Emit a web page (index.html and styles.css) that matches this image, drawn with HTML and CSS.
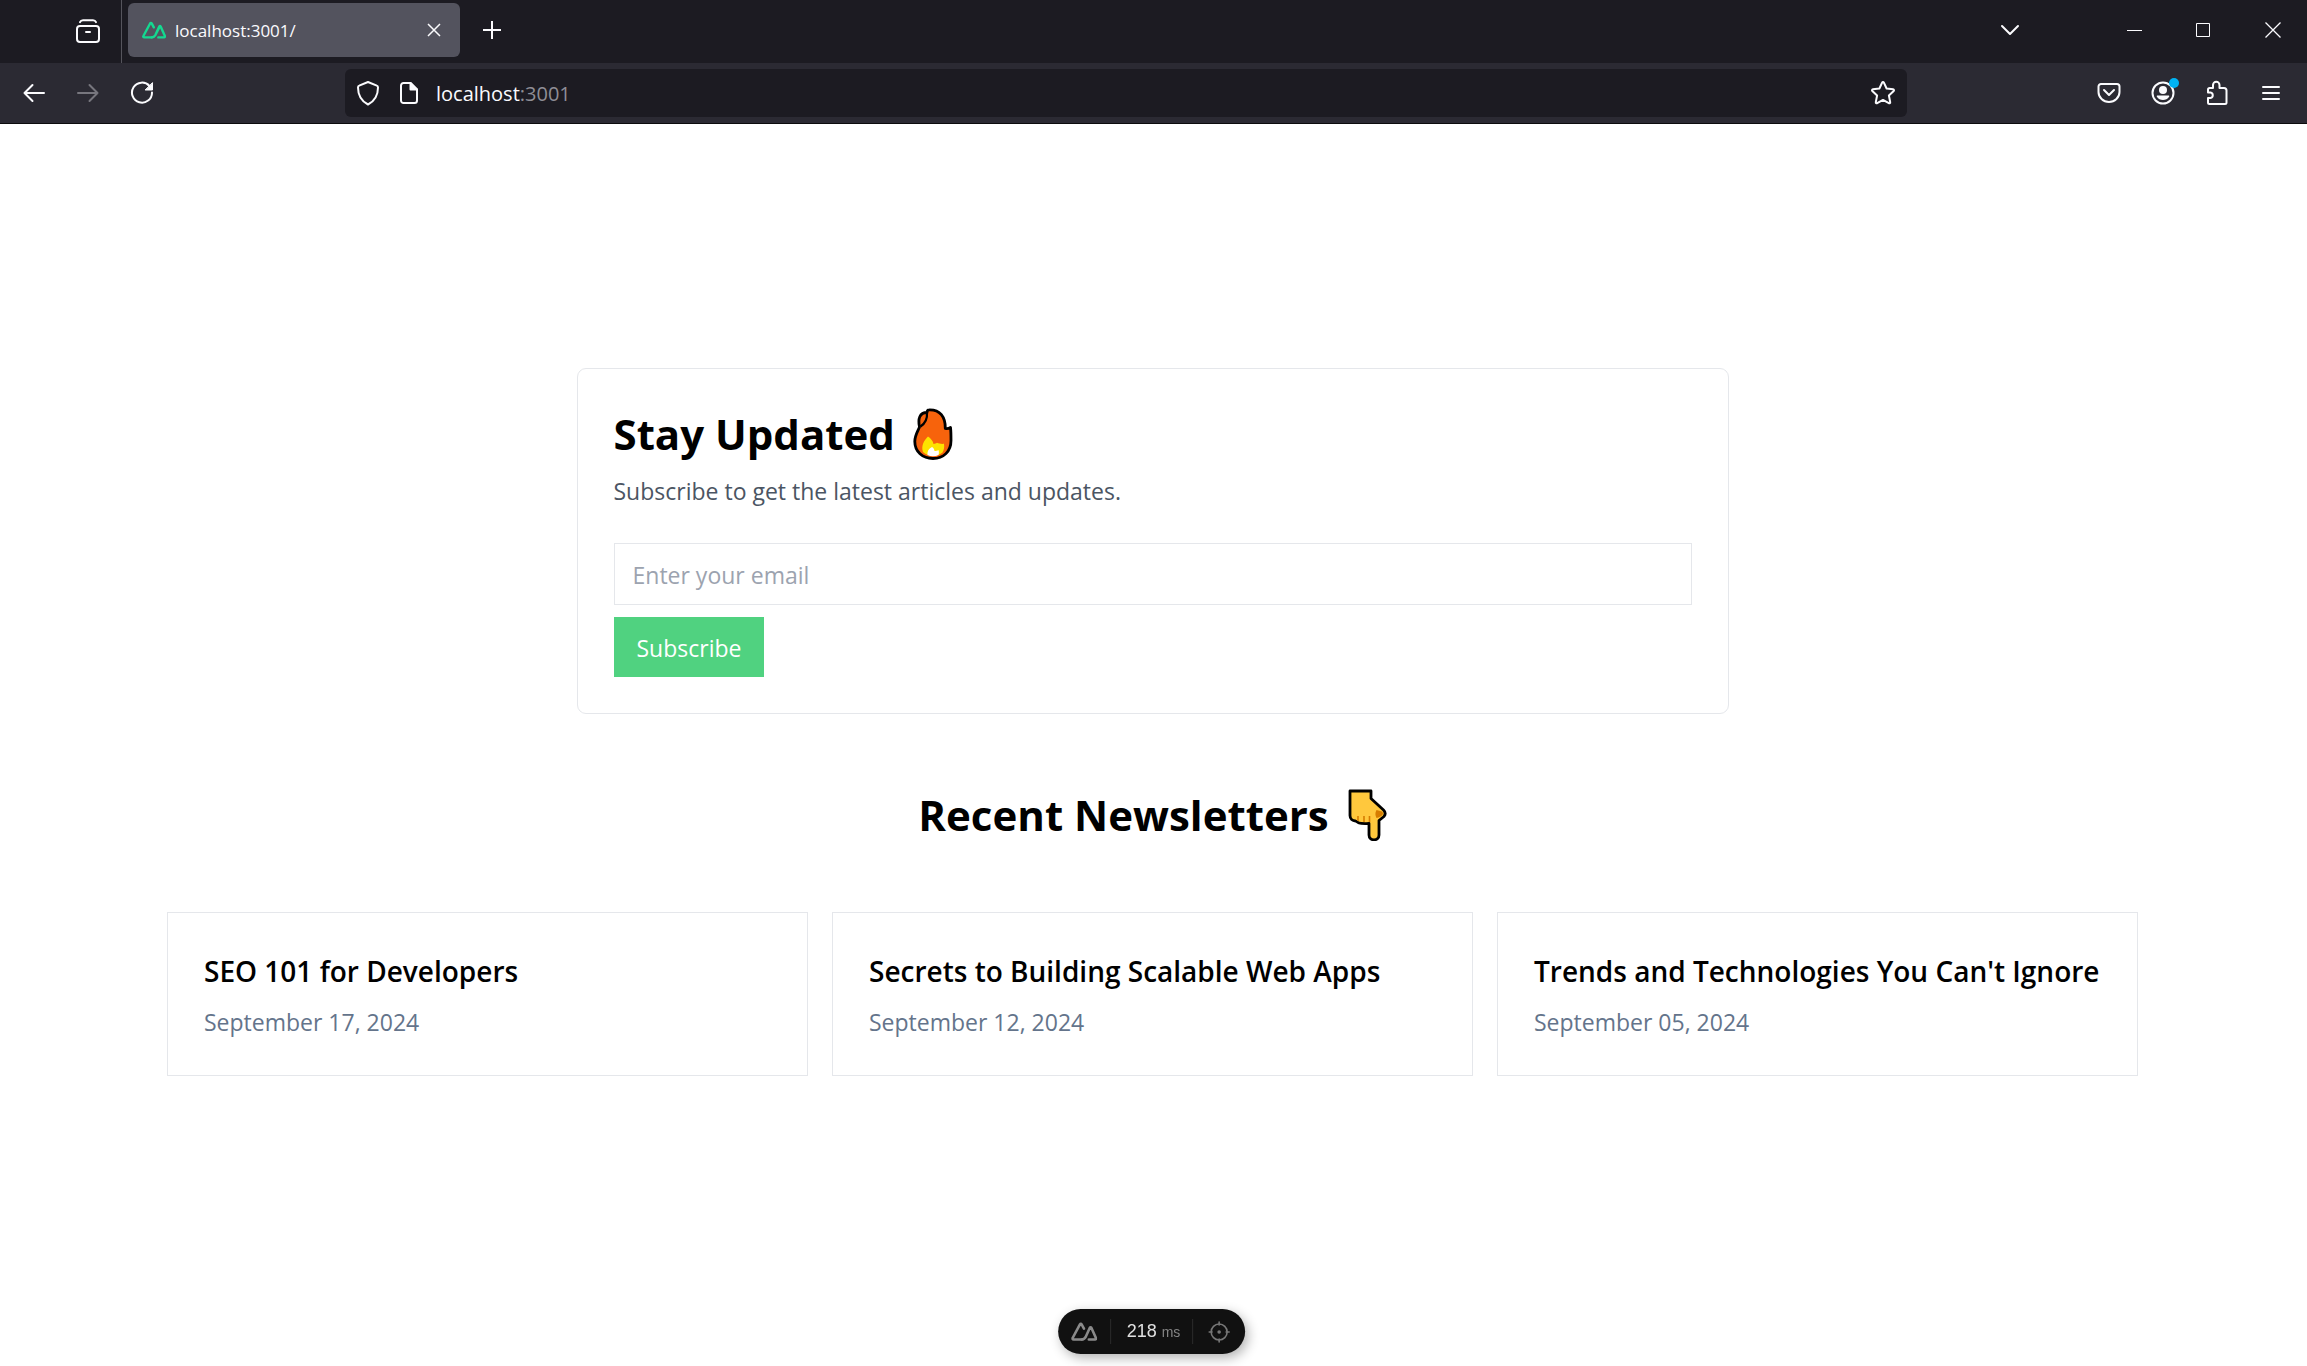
FILE: index.html
```html
<!DOCTYPE html>
<html lang="en">
<head>
  <meta charset="utf-8">
  <meta name="viewport" content="width=device-width, initial-scale=1">
  <title>localhost:3001/</title>
  <link rel="stylesheet" href="styles.css">
</head>
<body>
  <header class="browser">
    <div class="tab-strip">
      <div class="tab-strip-start">
        <button class="tool" type="button" aria-label="Firefox View">
          <svg width="24" height="24" viewBox="0 0 24 24" fill="none" stroke="currentColor" stroke-width="2" stroke-linecap="round"><rect x="1" y="7" width="22" height="16" rx="3"/><path d="M4 3.2C4.6 1.800 5.500 1.200 7 1.200h10c1.500 0 2.400.6 3 2"/><path d="M10 13h4"/></svg>
        </button>
      </div>
      <div class="tab">
        <svg class="tab-icon" width="24" height="18" viewBox="0 0 26 19" fill="none" stroke="#14d990" stroke-width="2.600" stroke-linejoin="round" stroke-linecap="round"><path d="M10.500 17.500H2.400c-.9 0-1.300-.8-.9-1.500L8.800 2.400c.4-.7 1.300-.7 1.700 0l2.300 4.200"/><path d="M10.500 17.500c2.200 0 3-.8 4-2.500l4.200-8.300M10.500 17.500c2.200 0 3-.8 4-2.500l4.200-9.300c.4-.7 1.100-.7 1.500 0l4.600 10.300c.3.800-.1 1.500-.9 1.500h-6.200"/></svg>
        <span class="tab-title">localhost:3001/</span>
        <button class="tab-close" type="button" aria-label="Close tab">
          <svg width="14" height="14" viewBox="0 0 14 14" stroke="currentColor" stroke-width="1.500"><path d="M1 1l12 12M13 1L1 13"/></svg>
        </button>
      </div>
      <button class="tool new-tab" type="button" aria-label="New tab">
        <svg width="18" height="18" viewBox="0 0 18 18" stroke="currentColor" stroke-width="2"><path d="M9 0v18M0 9h18"/></svg>
      </button>
      <button class="tool all-tabs" type="button" aria-label="List all tabs">
        <svg width="20" height="12" viewBox="0 0 20 12" fill="none" stroke="currentColor" stroke-width="2" stroke-linecap="round" stroke-linejoin="round"><path d="M2 2l8 8 8-8"/></svg>
      </button>
      <button class="window-button" type="button" aria-label="Minimize">
        <svg width="15" height="15" viewBox="0 0 15 15" stroke="currentColor"><path d="M0 7.500h15"/></svg>
      </button>
      <button class="window-button" type="button" aria-label="Maximize">
        <svg width="15" height="15" viewBox="0 0 15 15" fill="none" stroke="currentColor"><path d="M.5.5h13v13H.5z"/></svg>
      </button>
      <button class="window-button" type="button" aria-label="Close window">
        <svg width="16" height="16" viewBox="0 0 16 16" stroke="currentColor" stroke-width="1.300"><path d="M.5.5l15 15M15.500.5l-15 15"/></svg>
      </button>
    </div>
    <div class="toolbar">
      <button class="tool" type="button" aria-label="Back">
        <svg width="24" height="24" viewBox="0 0 24 24" fill="none" stroke="currentColor" stroke-width="2" stroke-linecap="round" stroke-linejoin="round"><path d="M22 12H2.500M10.500 4l-8 8 8 8"/></svg>
      </button>
      <button class="tool" type="button" aria-label="Forward" disabled>
        <svg width="24" height="24" viewBox="0 0 24 24" fill="none" stroke="currentColor" stroke-width="2" stroke-linecap="round" stroke-linejoin="round"><path d="M2 12h19.500M13.500 4l8 8-8 8"/></svg>
      </button>
      <button class="tool" type="button" aria-label="Reload">
        <svg width="24" height="24" viewBox="0 0 24 24" fill="none" stroke="currentColor" stroke-width="2" stroke-linecap="round"><path d="M19.500 5A10 10 0 1 0 22 11.500"/><path d="M22.500 2v7h-7z" fill="currentColor" stroke-width="1" stroke-linejoin="round"/></svg>
      </button>
      <div class="url-bar">
        <svg width="24" height="26" viewBox="0 0 24 26" fill="none" stroke="currentColor" stroke-width="2" stroke-linejoin="round"><path d="M12 2l8.800 3.600c.8.300 1.200 1 1.200 1.800C22 14.500 18.500 21 12 24.500 5.500 21 2 14.500 2 7.400c0-.8.4-1.500 1.200-1.800z"/></svg>
        <svg width="18" height="24" viewBox="0 0 18 24" fill="none" stroke="currentColor" stroke-width="2" stroke-linejoin="round"><path d="M10.500 2H3.500A2.500 2.500 0 0 0 1 4.500v15A2.500 2.500 0 0 0 3.500 22h11a2.500 2.500 0 0 0 2.500-2.500V8.500z"/><path d="M10.500 2v6.500H17z" fill="currentColor"/></svg>
        <span class="url">localhost<span class="url-port">:3001</span></span>
        <button class="bookmark" type="button" aria-label="Bookmark this page">
          <svg width="26" height="26" viewBox="0 0 26 26" fill="none" stroke="currentColor" stroke-width="2" stroke-linejoin="round"><path d="M12.100 2.600c.4-.8 1.400-.8 1.800 0l2.700 5.900 6.500.8c.9.100 1.200 1.100.6 1.700l-4.800 4.500 1.300 6.600c.2.900-.7 1.500-1.400 1L13 19.900l-5.800 3.200c-.7.500-1.600-.1-1.400-1l1.300-6.600L2.300 11c-.6-.6-.3-1.600.6-1.700l6.500-.8z"/></svg>
        </button>
      </div>
      <button class="tool" type="button" aria-label="Save to Pocket">
        <svg width="24" height="24" viewBox="0 0 24 24" fill="none" stroke="currentColor" stroke-width="2" stroke-linecap="round" stroke-linejoin="round"><path d="M4 3h16a2.500 2.500 0 0 1 2.500 2.500V11a10.500 10 0 0 1-21 0V5.500A2.500 2.500 0 0 1 4 3z"/><path d="M7 9l5 5 5-5"/></svg>
      </button>
      <button class="tool account" type="button" aria-label="Account">
        <svg width="24" height="24" viewBox="0 0 24 24"><circle cx="12" cy="12" r="10.500" fill="none" stroke="currentColor" stroke-width="2"/><circle cx="12" cy="9" r="4" fill="currentColor"/><path d="M6.500 14.500h11c.8 0 1 .7.6 1.300C16.700 18 14.500 19 12 19s-4.700-1-6.100-3.200c-.4-.6-.2-1.300.6-1.300z" fill="currentColor"/></svg>
      </button>
      <button class="tool" type="button" aria-label="Extensions">
        <svg width="22" height="26" viewBox="0 0 22 26" fill="none" stroke="currentColor" stroke-width="2" stroke-linejoin="round"><path d="M7 8V5a3 3 0 0 1 6.500 0v3H18a2.500 2.500 0 0 1 2.500 2.500v12A1.500 1.500 0 0 1 19 24H3.500A1.500 1.500 0 0 1 2 22.500V18h2.500a2.800 2.800 0 0 0 0-5.500H2v-2.800C2 8.700 2.700 8 3.700 8z"/></svg>
      </button>
      <button class="tool" type="button" aria-label="Open application menu">
        <svg width="18" height="16" viewBox="0 0 18 16" stroke="currentColor" stroke-width="2" stroke-linecap="round"><path d="M1 2h16M1 8h16M1 14h16"/></svg>
      </button>
    </div>
  </header>

  <main class="page">
    <section class="signup">
      <h1 class="heading">Stay Updated
        <svg class="emoji" width="40" height="52" viewBox="0 0 40 52" role="img" aria-label="fire"><path d="M14 4.500c0-1.700.6-2.700 2.200-2.700C27 1.500 32.500 9 32.300 20.500c1.800.4 3.600 0 5.200-1 .5 4 .5 9 .5 13C38 43.500 30.500 50.500 20 50.500S1.800 43.500 1.800 33.500c0-6 3-10 4.700-14.500C4.800 11 6.500 4.500 14 4.500z" fill="#f7630c" stroke="#000" stroke-width="2.800" stroke-linejoin="round"/><path d="M7.500 18.500C12 15.500 14.500 11 14 4.500" fill="none" stroke="#000" stroke-width="2.200"/><path d="M10 44c-2-6 .5-11 5-15.500 2.800 2 5 4.500 5.500 7.500 1.500 0 2.500-.5 3.500-1.200 2 .8 4.500 1.400 7 1 .5 3.500 0 6-1.500 8.700-5.500 4.500-14 4.500-19.500-.5z" fill="#fde300"/><path d="M14.500 47c-.5-3.500 1-6.500 4.500-8 1.500 1 2.500 2.500 2.500 4 1.500 0 3-.4 4-1 .5 1.500.5 3.500 0 5-3.300 1.600-7.700 1.600-11 0z" fill="#fff"/></svg>
      </h1>
      <p class="lead">Subscribe to get the latest articles and updates.</p>
      <form class="signup-form">
        <input class="email" type="email" placeholder="Enter your email" aria-label="Email">
        <button class="subscribe" type="submit">Subscribe</button>
      </form>
    </section>

    <h2 class="heading">Recent Newsletters
      <svg class="emoji" width="40" height="52" viewBox="0 0 40 52" role="img" aria-label="pointing down"><path d="M3 2h21v7.500L36.500 21c2 2 2 4.500.5 6.500l-5 4V46c0 6.500-10 6.500-10 0V34.500c-4 0-7.500.3-10-.5-1.500-.5-2-1.500-3.500-2C5.500 32 3 30 3 26.500z" fill="#ffc83d" stroke="#000" stroke-width="2.800" stroke-linejoin="round"/><path d="M29.500 21l5.500 1.500c2.500 2.500 0 5-5.500 6.500-1.500-2.500-1.500-5.500 0-8z" fill="#d67d00"/><path d="M11 27v5M17 27v6M22.500 27v6" stroke="#d67d00" stroke-width="1.600"/></svg>
    </h2>

    <section class="newsletters">
      <article class="card">
        <h3 class="card-title">SEO 101 for Developers</h3>
        <p class="card-date">September 17, 2024</p>
      </article>
      <article class="card">
        <h3 class="card-title">Secrets to Building Scalable Web Apps</h3>
        <p class="card-date">September 12, 2024</p>
      </article>
      <article class="card">
        <h3 class="card-title">Trends and Technologies You Can't Ignore</h3>
        <p class="card-date">September 05, 2024</p>
      </article>
    </section>
  </main>

  <aside class="devtools">
    <button class="devtools-button" type="button" aria-label="Toggle Nuxt DevTools">
      <svg width="26" height="19" viewBox="0 0 26 19" fill="none" stroke="#8a8a8a" stroke-width="2.600" stroke-linejoin="round" stroke-linecap="round"><path d="M10.500 17.500H2.400c-.9 0-1.300-.8-.9-1.500L8.800 2.400c.4-.7 1.300-.7 1.700 0l2.300 4.200"/><path d="M10.500 17.500c2.200 0 3-.8 4-2.500l4.200-9.300c.4-.7 1.100-.7 1.500 0l4.600 10.300c.3.800-.1 1.500-.9 1.500h-6.200"/></svg>
    </button>
    <div class="devtools-time">218 <small class="devtools-unit">ms</small></div>
    <button class="devtools-button" type="button" aria-label="Inspect component">
      <svg width="22" height="22" viewBox="0 0 22 22" fill="none" stroke="#777" stroke-width="1.600" stroke-linecap="round"><circle cx="11" cy="11" r="8"/><path d="M11 1v3M11 18v3M1 11h3M18 11h3"/><circle cx="11" cy="11" r="1" fill="#777"/></svg>
    </button>
  </aside>
</body>
</html>
```

FILE: styles.css
```css
*,
*::before,
*::after {
  box-sizing: border-box;
}

body {
  margin: 0;
  min-height: 100vh;
  background: #fff;
  color: #000;
  font-family: "Open Sans", "Noto Sans", sans-serif;
  font-size: 23px;
  line-height: 36px;
}

h1,
h2,
h3,
p {
  margin: 0;
}

button,
input {
  padding: 0;
  border: 0;
  background: none;
  color: inherit;
  font: inherit;
}

svg {
  display: block;
  flex: none;
}

/* Browser window */

.browser {
  color: #fbfbfe;
  background: #2b2a33;
  border-bottom: 1px solid #0c0c0d;
}

.tab-strip {
  display: flex;
  align-items: flex-start;
  height: 63px;
  background: #1c1b22;
}

.tool,
.window-button,
.tab-close,
.bookmark {
  display: flex;
  flex: none;
  align-items: center;
  justify-content: center;
}

.tool {
  width: 54px;
}

.tool:disabled {
  color: #77767e;
}

.tab-strip-start {
  display: flex;
  height: 63px;
  padding: 0 6px 2px 61px;
  border-right: 1px solid #55545c;
}

.tab {
  display: flex;
  align-items: center;
  width: 332px;
  height: 54px;
  margin: 3px 5px 0 6px;
  padding: 0 12px 0 14px;
  border-radius: 6px;
  background: #53535e;
}

.tab-title {
  flex: 1;
  margin-left: 9px;
  padding-top: 2px;
  font-size: 17px;
}

.tab-close {
  width: 28px;
  height: 28px;
}

.all-tabs {
  margin: 0 63px 0 auto;
}

.window-button {
  width: 69px;
}

.tab-strip > .tool,
.window-button {
  height: 60px;
}

.toolbar {
  display: flex;
  align-items: center;
  height: 60px;
  padding: 0 9px 0 7px;
}

.url-bar {
  display: flex;
  flex: 1;
  align-items: center;
  height: 48px;
  margin: 0 175px 0 176px;
  padding: 0 11px;
  border-radius: 6px;
  background: #1c1b22;
}

.url {
  flex: 1;
  margin-left: 18px;
  padding-top: 2px;
  font-size: 20px;
}

.url-bar svg + svg {
  margin-left: 20px;
}

.url-port {
  color: #8f8e96;
}

.account {
  position: relative;
}

/* Notification dot on the account button */
.account::after {
  content: "";
  position: absolute;
  top: -3px;
  right: 11px;
  width: 10px;
  height: 10px;
  border-radius: 50%;
  background: #00b3f4;
}

/* Page */

.page {
  display: flex;
  flex-direction: column;
  align-items: center;
  gap: 72px;
  padding: 244px 169px 96px 167px;
}

.signup {
  width: 100%;
  max-width: 1152px;
  padding: 36px;
  border: 1px solid #e5e7eb;
  border-radius: 9px;
}

.heading {
  display: flex;
  align-items: center;
  gap: 18px;
  padding-top: 4px;
  font-size: 42px;
  font-weight: 700;
  line-height: 50px;
}

.heading .emoji {
  margin: -1px 0;
}

.lead {
  margin: 12px 0 34px;
  padding-top: 2px;
  color: #4b5563;
}

.signup-form {
  display: flex;
  flex-direction: column;
  align-items: flex-start;
  gap: 12px;
}

.email {
  width: 100%;
  height: 62px;
  padding: 2px 18px 0;
  border: 1px solid #e5e7eb;
}

.email::placeholder {
  color: #9ca3af;
  opacity: 1;
}

.subscribe {
  height: 60px;
  padding: 2px 23px 0;
  background: #50d280;
  color: #fff;
}

.newsletters {
  display: grid;
  grid-template-columns: repeat(auto-fit, minmax(480px, 1fr));
  gap: 24px;
  width: 100%;
}

.card {
  padding: 37px 36px 35px;
  border: 1px solid #e5e7eb;
}

.card-title {
  margin-bottom: 12px;
  font-size: 28px;
  font-weight: 600;
  line-height: 42px;
}

.card-date {
  color: #64748b;
}

/* Floating developer panel */

.devtools {
  position: fixed;
  bottom: 12px;
  left: 50%;
  display: flex;
  align-items: center;
  height: 45px;
  margin-left: -2px;
  border-radius: 24px;
  background: #111;
  color: #e0e0e0;
  font-family: "Liberation Sans", Arial, sans-serif;
  font-size: 18px;
  line-height: 24px;
  box-shadow: 3px 4px 12px rgba(0, 0, 0, 0.3);
  transform: translateX(-50%);
}

.devtools-button {
  display: flex;
  align-items: center;
  justify-content: center;
  width: 52px;
}

.devtools-time {
  padding: 0 12px 0 16px;
  border: solid #2c2c2c;
  border-width: 0 1px;
}

.devtools-unit {
  color: #858585;
  font-size: 14px;
}
```
